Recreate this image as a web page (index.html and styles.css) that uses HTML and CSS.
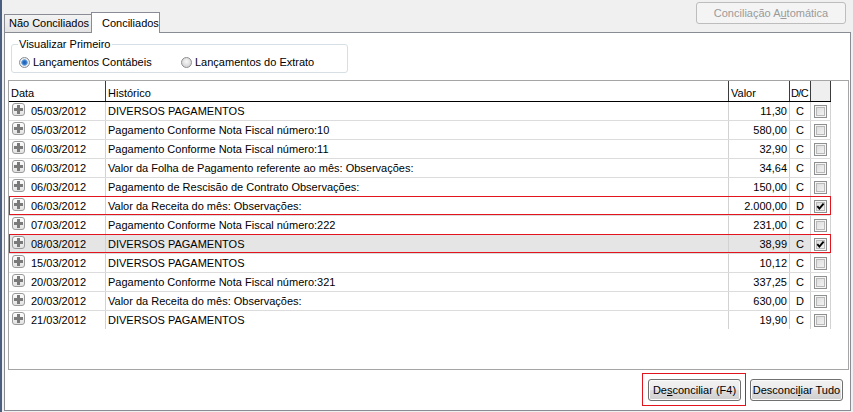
FILE: index.html
```html
<!DOCTYPE html>
<html lang="pt-BR">
<head>
<meta charset="utf-8">
<title>Conciliação</title>
<link rel="stylesheet" href="styles.css">
</head>
<body>
<div class="window">
  <div class="topbar">
    <div class="tabs">
      <div class="tab">Não Conciliados</div>
      <div class="tab tab-active">Conciliados</div>
    </div>
    <button class="btn-auto" disabled>Conciliação A<u>u</u>tomática</button>
  </div>
  <div class="panel">
    <fieldset class="group">
      <legend>Visualizar Primeiro</legend>
      <div class="radios">
        <label class="radio-item first"><span class="radio checked"></span>Lançamentos Contábeis</label>
        <label class="radio-item"><span class="radio"></span>Lançamentos do Extrato</label>
      </div>
    </fieldset>
    <div class="grid">
      <div class="head">
        <div class="hc c-data">Data</div>
        <div class="hc c-hist">Histórico</div>
        <div class="hc c-val">Valor</div>
        <div class="hc c-dc">D/C</div>
        <div class="hc c-chk"></div>
      </div>
      <div class="rows">
        <div class="row"><div class="cell c-data"><span class="plus"></span>05/03/2012</div><div class="cell c-hist">DIVERSOS PAGAMENTOS</div><div class="cell c-val">11,30</div><div class="cell c-dc">C</div><div class="cell c-chk"><span class="chk"></span></div></div>
        <div class="row"><div class="cell c-data"><span class="plus"></span>05/03/2012</div><div class="cell c-hist">Pagamento Conforme Nota Fiscal número:10</div><div class="cell c-val">580,00</div><div class="cell c-dc">C</div><div class="cell c-chk"><span class="chk"></span></div></div>
        <div class="row"><div class="cell c-data"><span class="plus"></span>06/03/2012</div><div class="cell c-hist">Pagamento Conforme Nota Fiscal número:11</div><div class="cell c-val">32,90</div><div class="cell c-dc">C</div><div class="cell c-chk"><span class="chk"></span></div></div>
        <div class="row"><div class="cell c-data"><span class="plus"></span>06/03/2012</div><div class="cell c-hist">Valor da Folha de Pagamento referente ao mês: Observações:</div><div class="cell c-val">34,64</div><div class="cell c-dc">C</div><div class="cell c-chk"><span class="chk"></span></div></div>
        <div class="row"><div class="cell c-data"><span class="plus"></span>06/03/2012</div><div class="cell c-hist">Pagamento de Rescisão de Contrato Observações:</div><div class="cell c-val">150,00</div><div class="cell c-dc">C</div><div class="cell c-chk"><span class="chk"></span></div></div>
        <div class="row marked"><div class="cell c-data"><span class="plus"></span>06/03/2012</div><div class="cell c-hist">Valor da Receita do mês: Observações:</div><div class="cell c-val">2.000,00</div><div class="cell c-dc">D</div><div class="cell c-chk"><span class="chk on"><svg viewBox="0 0 11 11" width="11" height="11"><path d="M2.3 5.2 L4.4 7.6 L8.6 2.6" fill="none" stroke="#000" stroke-width="1.9"/></svg></span></div></div>
        <div class="row"><div class="cell c-data"><span class="plus"></span>07/03/2012</div><div class="cell c-hist">Pagamento Conforme Nota Fiscal número:222</div><div class="cell c-val">231,00</div><div class="cell c-dc">C</div><div class="cell c-chk"><span class="chk"></span></div></div>
        <div class="row marked selected"><div class="cell c-data"><span class="plus"></span>08/03/2012</div><div class="cell c-hist">DIVERSOS PAGAMENTOS</div><div class="cell c-val">38,99</div><div class="cell c-dc">C</div><div class="cell c-chk"><span class="chk on"><svg viewBox="0 0 11 11" width="11" height="11"><path d="M2.3 5.2 L4.4 7.6 L8.6 2.6" fill="none" stroke="#000" stroke-width="1.9"/></svg></span></div></div>
        <div class="row"><div class="cell c-data"><span class="plus"></span>15/03/2012</div><div class="cell c-hist">DIVERSOS PAGAMENTOS</div><div class="cell c-val">10,12</div><div class="cell c-dc">C</div><div class="cell c-chk"><span class="chk"></span></div></div>
        <div class="row"><div class="cell c-data"><span class="plus"></span>20/03/2012</div><div class="cell c-hist">Pagamento Conforme Nota Fiscal número:321</div><div class="cell c-val">337,25</div><div class="cell c-dc">C</div><div class="cell c-chk"><span class="chk"></span></div></div>
        <div class="row"><div class="cell c-data"><span class="plus"></span>20/03/2012</div><div class="cell c-hist">Valor da Receita do mês: Observações:</div><div class="cell c-val">630,00</div><div class="cell c-dc">D</div><div class="cell c-chk"><span class="chk"></span></div></div>
        <div class="row"><div class="cell c-data"><span class="plus"></span>21/03/2012</div><div class="cell c-hist">DIVERSOS PAGAMENTOS</div><div class="cell c-val">19,90</div><div class="cell c-dc">C</div><div class="cell c-chk"><span class="chk"></span></div></div>
      </div>
    </div>
    <div class="actions">
      <span class="mark-box"><button class="btn">De<u>s</u>conciliar (F4)</button></span>
      <button class="btn btn-all">Desconci<u>l</u>iar Tudo</button>
    </div>
  </div>
</div>
</body>
</html>
```
FILE: styles.css
```css
* { box-sizing: border-box; }

html, body {
  margin: 0;
  padding: 0;
}

body {
  width: 853px;
  height: 412px;
  overflow: hidden;
  background: #f0f0f0;
  font-family: "Liberation Sans", Arial, sans-serif;
  font-size: 11px;
  color: #000;
}

.window {
  height: 412px;
  border-left: 2px solid #4a5e80;
  padding-left: 2px;
  display: flex;
  flex-direction: column;
}

/* ---------- top bar ---------- */
.topbar {
  height: 32px;
  display: flex;
  justify-content: space-between;
  align-items: flex-start;
  position: relative;
  z-index: 1;
}

.tabs {
  height: 33px;
  display: flex;
  align-items: flex-end;
}

.tab {
  width: 87px;
  height: 18px;
  margin-bottom: 1px;
  border: 1px solid #898c95;
  border-right: none;
  border-bottom: none;
  background: linear-gradient(#f3f3f3, #e3e3e3);
  line-height: 17px;
  text-align: center;
  padding-left: 2px;
  white-space: nowrap;
}

.tab-active {
  width: 69px;
  height: 21px;
  margin-bottom: 0;
  border-right: 1px solid #898c95;
  background: #fff;
  line-height: 20px;
  text-align: left;
  padding-left: 10px;
}

.btn-auto {
  margin: 2px 7px 0 0;
  width: 150px;
  height: 22px;
  padding: 0;
  border: 1px solid #bdbdbd;
  border-radius: 3px;
  background: #f4f4f4;
  color: #9a9a9a;
  font: inherit;
  line-height: 20px;
}

u { text-decoration: underline; text-underline-offset: 1px; }

/* ---------- panel ---------- */
.panel {
  width: 847px;
  height: 379px;
  border: 1px solid #898c95;
  background: #fff;
  display: flex;
  flex-direction: column;
}

.group {
  margin: 5px 0 0 6px;
  width: 337px;
  height: 35px;
  padding: 0 0 0 7px;
  border: 1px solid #d5dfe5;
  border-radius: 3px;
  min-width: 0;
}

.group legend {
  padding: 0 1px;
  margin-left: -1px;
  line-height: 13px;
}

.radios {
  margin-top: 5px;
  display: flex;
  height: 13px;
  line-height: 13px;
}

.radio-item {
  display: flex;
  align-items: center;
  white-space: nowrap;
}

.radio-item.first { width: 162px; }

.radio {
  width: 11px;
  height: 11px;
  margin-right: 3px;
  border-radius: 50%;
  border: 1px solid #8a8d91;
  background: radial-gradient(circle at 50% 40%, #f8f8f8 0, #d6d6d6 70%, #c2c2c2 100%);
}

.radio.checked {
  background: radial-gradient(circle at 50% 50%, #1d5fb3 0, #2b73c6 1.8px, #7fb0e2 3px, #eef2f7 3.6px, #d2d6da 100%);
}

/* ---------- grid ---------- */
.grid {
  margin: 7px 1px 0 3px;
  height: 290px;
  border: 1px solid #a5a5a5;
  background: #fff;
}

.head, .row {
  display: grid;
  grid-template-columns: 97px 623px 61px 21px 20px;
  width: 822px;
}

.head {
  height: 21px;
  border-bottom: 1px solid #000;
}

.hc {
  border-right: 1px solid #3c3c3c;
  padding: 4px 0 0 2px;
  line-height: 16px;
  white-space: nowrap;
  overflow: hidden;
}

.hc.c-dc { padding-left: 1px; letter-spacing: -0.6px; }
.hc.c-chk { background: #efefef; }

.row {
  height: 19px;
  border-top: 1px solid #dcdcdc;
}

.row:first-child {
  height: 18px;
  border-top: none;
}

.row.selected { background: #e5e5e5; }

.row.marked {
  outline: 1px solid #e2141e;
  outline-offset: -1px;
}

.cell {
  border-right: 1px solid #d2d2d2;
  line-height: 18px;
  white-space: nowrap;
  overflow: hidden;
}

.cell.c-data {
  display: flex;
  align-items: flex-start;
  padding-left: 3px;
}

.cell.c-hist { padding-left: 2px; }
.cell.c-val { text-align: right; padding-right: 2px; }
.cell.c-dc { text-align: center; }

.cell.c-chk {
  display: flex;
  justify-content: center;
  align-items: flex-start;
  background: #fff;
}

.plus {
  flex: none;
  width: 13px;
  height: 13px;
  margin: 1px 6px 0 0;
  border: 1px solid #9a9a9a;
  border-radius: 3px;
  background:
    linear-gradient(#7a7a7a, #7a7a7a) center / 9px 3px no-repeat,
    linear-gradient(#7a7a7a, #7a7a7a) center / 3px 9px no-repeat,
    linear-gradient(#fdfdfd, #e2e2e2);
}

.chk {
  width: 13px;
  height: 13px;
  margin-top: 3px;
  border: 1px solid #8e8f8f;
  background: linear-gradient(135deg, #d9d9d9, #f7f7f7);
  box-shadow: inset 0 0 0 1px #f6f6f6, inset 0 0 0 2px #b9b9b9;
  display: flex;
  align-items: center;
  justify-content: center;
}

.chk svg { display: block; }

/* ---------- buttons ---------- */
.actions {
  margin-top: 3px;
  display: flex;
  justify-content: flex-end;
  align-items: flex-start;
  gap: 4px;
  padding-right: 7px;
}

.mark-box {
  display: block;
  border: 1px solid #e2141e;
  padding: 5px 4px 4px 5px;
}

.btn {
  display: block;
  width: 93px;
  height: 22px;
  padding: 1px 0 0;
  border: 1px solid #707070;
  border-radius: 3px;
  background: linear-gradient(#f2f2f2 0%, #ebebeb 48%, #dddddd 52%, #cfcfcf 100%);
  box-shadow: inset 0 0 0 1px #fbfbfb;
  font: inherit;
  color: #000;
  line-height: 19px;
  white-space: nowrap;
}

.btn-all { margin-top: 6px; }
```
